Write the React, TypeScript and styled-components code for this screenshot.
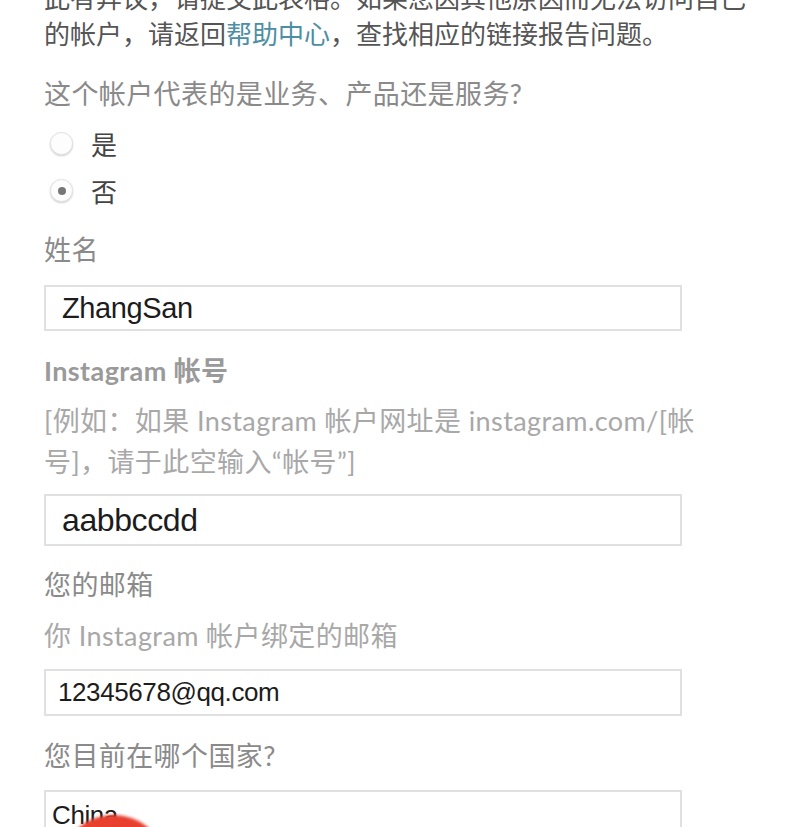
import React from 'react'
import styled, { createGlobalStyle } from 'styled-components'

const GlobalStyle = createGlobalStyle`
  html, body {
    margin: 0;
    padding: 0;
    background: #ffffff;
    overflow: hidden;
  }
  body {
    font-family: "Lato", "Noto Sans CJK SC", sans-serif;
  }
`

const Page = styled.div`
  position: relative;
  width: 800px;
  height: 827px;
  overflow: hidden;
  padding-left: 44px;
  box-sizing: border-box;
  background: #fff;
`

const Intro = styled.p`
  margin: -20px 0 0;
  width: 720px;
  font-size: 26px;
  line-height: 36px;
  color: #555;
`

const HelpLink = styled.a`
  color: #4d8ea3;
  text-decoration: none;
`

const Question = styled.div<{ $top: number }>`
  margin-top: ${(p) => p.$top}px;
  font-size: 27px;
  line-height: 36px;
  letter-spacing: 0.4px;
  color: #8a8a8a;
`

const BoldLabel = styled(Question)`
  font-weight: 700;
  color: #9a9a9a;
`

const Hint = styled.div<{ $top: number }>`
  margin-top: ${(p) => p.$top}px;
  width: 662px;
  font-size: 27px;
  line-height: 41px;
  letter-spacing: 0.4px;
  color: #a8a8a8;
`

const RadioGroup = styled.div`
  margin-top: 8px;
  display: flex;
  flex-direction: column;
`

const RadioRow = styled.label`
  display: flex;
  align-items: center;
  height: 47px;
  gap: 18px;
  padding-left: 6px;
  font-size: 26px;
  color: #444;
`

const RadioDot = styled.span<{ $on?: boolean }>`
  width: 23px;
  height: 23px;
  border-radius: 50%;
  border: 1px solid #e2e2e2;
  box-shadow: 0 1px 2px rgba(0, 0, 0, 0.18);
  background: #fdfdfd;
  display: flex;
  align-items: center;
  justify-content: center;
  box-sizing: border-box;
  &::after {
    content: '';
    width: 8px;
    height: 8px;
    border-radius: 50%;
    background: #777;
    display: ${(p) => (p.$on ? 'block' : 'none')};
  }
`

const Field = styled.div<{ $top: number; $h: number; $size: number; $pad: number }>`
  margin-top: ${(p) => p.$top}px;
  width: 638px;
  height: ${(p) => p.$h}px;
  box-sizing: border-box;
  border: 2px solid #e0e0e0;
  display: flex;
  align-items: center;
  padding-left: ${(p) => p.$pad}px;
  font-family: "Liberation Sans", "Noto Sans CJK SC", sans-serif;
  font-size: ${(p) => p.$size}px;
  color: #1c1c1c;
  letter-spacing: -0.4px;
`

const Smudge = styled.div`
  position: absolute;
  left: 61px;
  top: 815px;
  width: 105px;
  height: 100px;
  border-radius: 50%;
  background: radial-gradient(circle at 50% 40%, #e63a2e 0%, #e8412f 60%, #ef5a45 100%);
  filter: blur(1.5px);
`

export default function App() {
  return (
    <Page>
      <GlobalStyle />
      <Intro>
        此有异议，请提交此表格。如果您因其他原因而无法访问自己的帐户，请返回<HelpLink>帮助中心</HelpLink>，查找相应的链接报告问题。
      </Intro>
      <Question $top={24}>这个帐户代表的是业务、产品还是服务?</Question>
      <RadioGroup>
        <RadioRow>
          <RadioDot />
          是
        </RadioRow>
        <RadioRow>
          <RadioDot $on />
          否
        </RadioRow>
      </RadioGroup>
      <Question $top={18}>姓名</Question>
      <Field $top={17} $h={46} $size={29} $pad={16}>ZhangSan</Field>
      <BoldLabel $top={22}>Instagram 帐号</BoldLabel>
      <Hint $top={11}>[例如：如果 Instagram 帐户网址是 instagram.com/[帐号]，请于此空输入“帐号”]</Hint>
      <Field $top={12} $h={52} $size={32} $pad={16}>aabbccdd</Field>
      <Question $top={21}>您的邮箱</Question>
      <Hint $top={12}>你 Instagram 帐户绑定的邮箱</Hint>
      <Field $top={13} $h={47} $size={26} $pad={12}>12345678@qq.com</Field>
      <Question $top={22}>您目前在哪个国家?</Question>
      <Field $top={16} $h={50} $size={26} $pad={6}>China</Field>
      <Smudge />
    </Page>
  )
}
